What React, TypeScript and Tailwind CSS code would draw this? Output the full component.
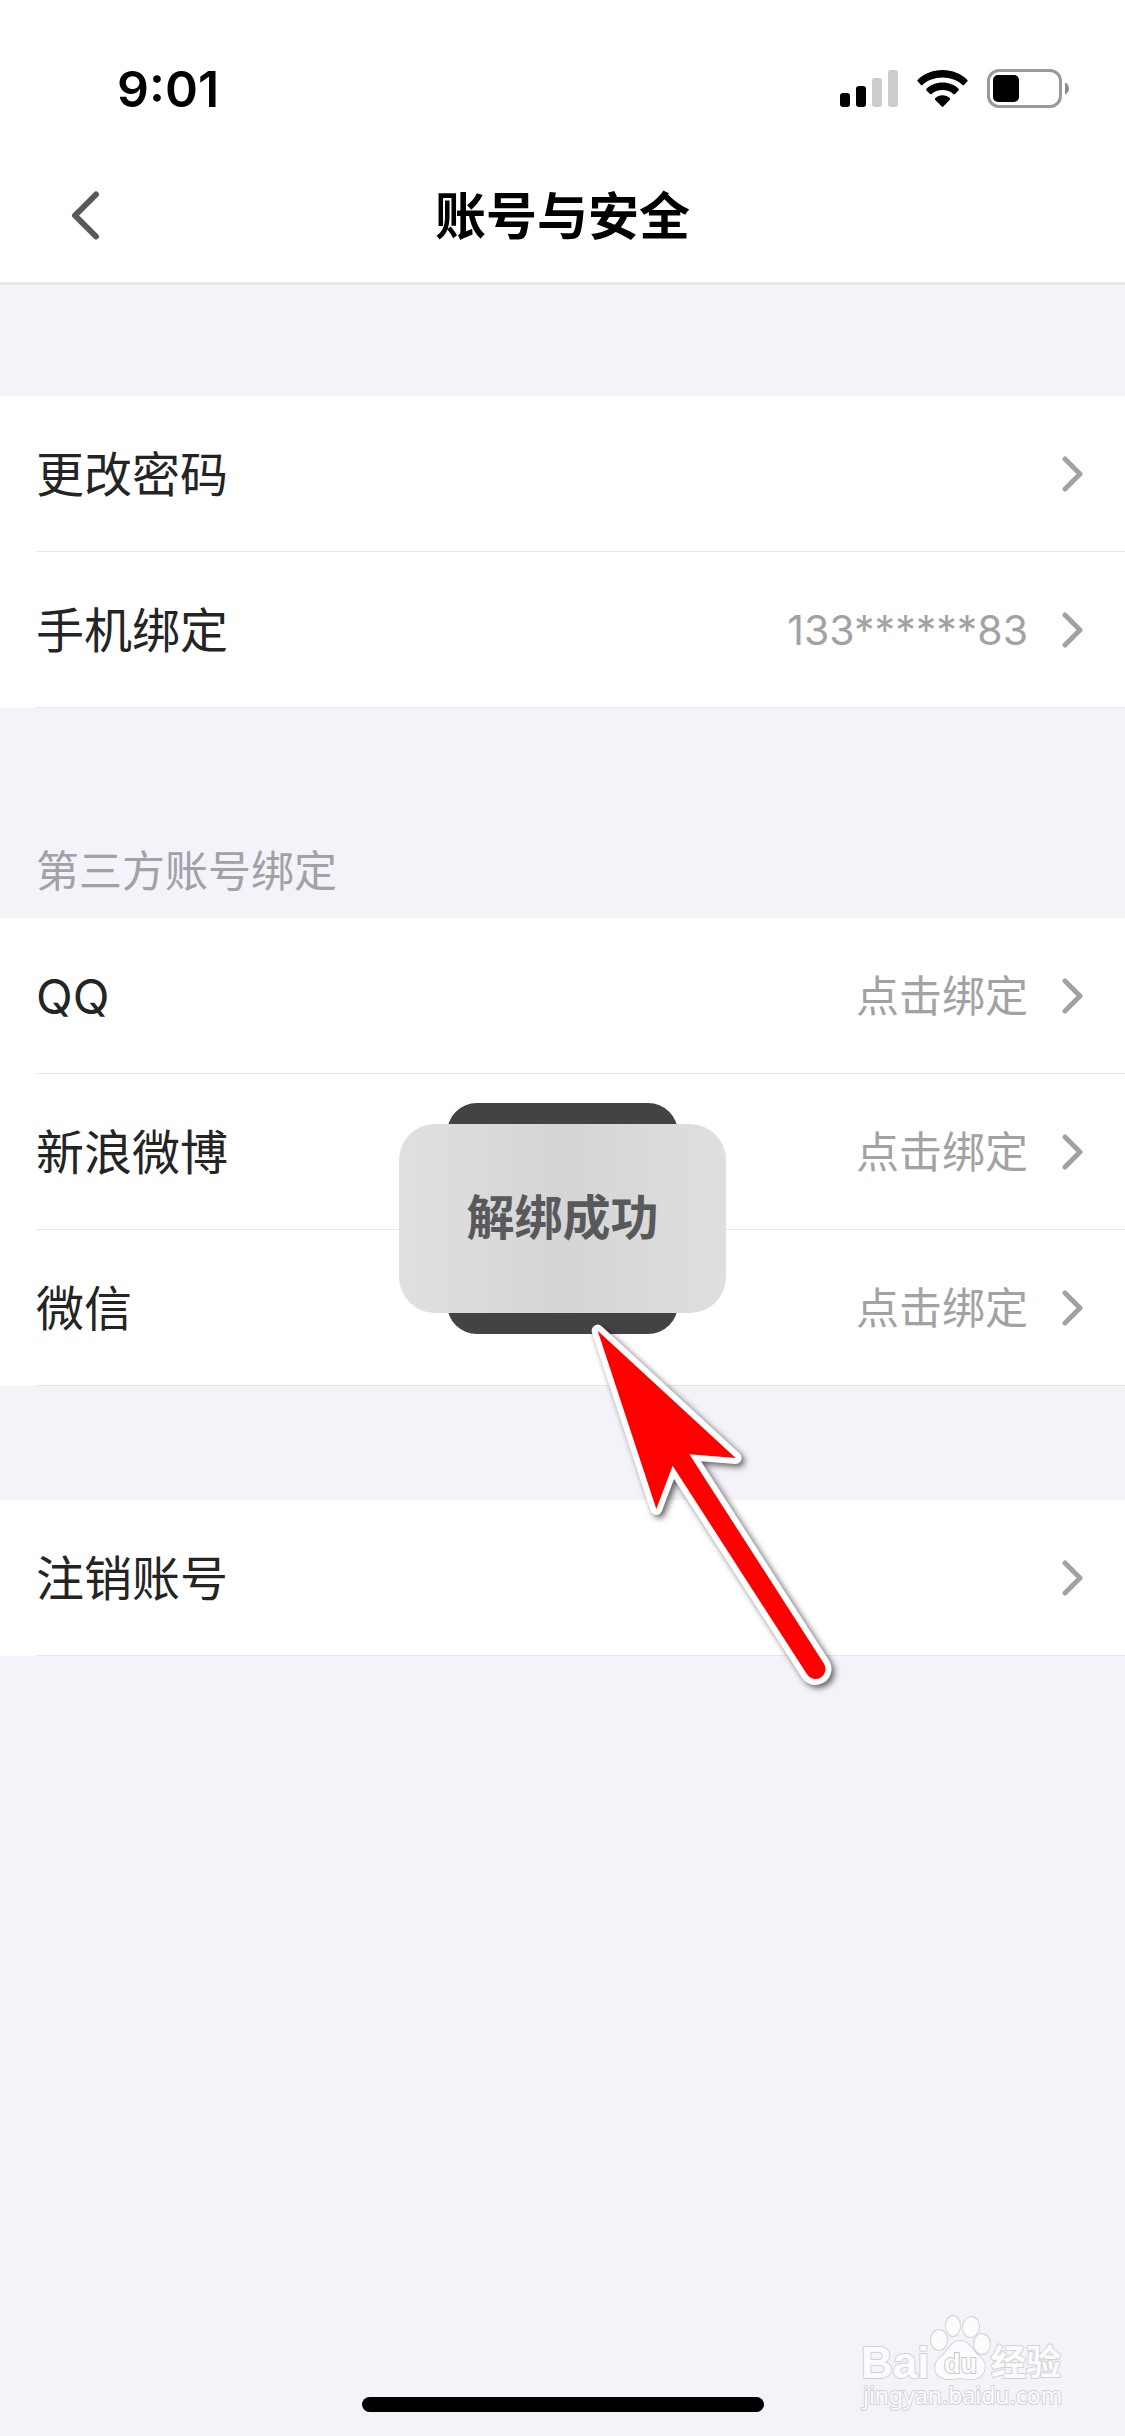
import React from "react";
import clsx from "clsx";

type Item = {
  label: string;
  value?: string;
  numeric?: boolean;
};

const accountItems: Item[] = [
  { label: "更改密码" },
  { label: "手机绑定", value: "133******83", numeric: true },
];

const thirdPartyItems: Item[] = [
  { label: "QQ", value: "点击绑定" },
  { label: "新浪微博", value: "点击绑定" },
  { label: "微信", value: "点击绑定" },
];

const StatusBar = () => {
  return (
    <div className="flex h-[132px] items-center justify-between pt-[45px] pr-14 pl-[117px]">
      <span className="text-[50px] leading-none font-semibold">9:01</span>
      <div className="flex items-center gap-[19px]">
        <svg width="58" height="37" viewBox="0 0 58 37" aria-hidden="true">
          <rect x="0" y="23" width="10" height="14" rx="3" />
          <rect x="16" y="16" width="10" height="21" rx="3" />
          <rect x="32" y="8" width="10" height="29" rx="3" fill="#cccccc" />
          <rect x="48" y="0" width="10" height="37" rx="3" fill="#cccccc" />
        </svg>
        <svg width="51" height="37" viewBox="0 0 51 37" aria-hidden="true">
          <path d="M25.5 0C35.500 0 44.300 3.800 50.200 9.700Q51.100 10.700 50.200 11.600L47 14.900Q46.300 15.600 45.500 14.900C40.500 10.200 33.500 7.400 25.500 7.400S10.500 10.200 5.500 14.900Q4.700 15.600 4 14.900L.8 11.600Q-.1 10.700 .8 9.700C6.700 3.800 15.500 0 25.500 0Z" />
          <path d="M25.5 12.600C32 12.600 37.500 15 41.500 18.700Q42.300 19.600 41.500 20.500L38 24Q37.200 24.700 36.400 24C33.500 21.500 29.800 20 25.500 20S17.500 21.500 14.600 24Q13.800 24.700 13 24L9.500 20.500Q8.700 19.600 9.500 18.700C13.500 15 19 12.600 25.500 12.600Z" />
          <path d="M25.500 25.300C28.500 25.300 31 26.500 32.700 28.100Q33.500 29 32.700 29.900L26.300 36.400Q25.500 37.200 24.700 36.400L18.300 29.900Q17.500 29 18.300 28.100C20 26.500 22.500 25.300 25.500 25.300Z" />
        </svg>
        <svg width="82" height="39" viewBox="0 0 82 39" aria-hidden="true">
          <rect
            x="1.500"
            y="1.500"
            width="72"
            height="36"
            rx="10.500"
            fill="none"
            stroke="#999999"
            strokeWidth="3"
          />
          <rect x="6" y="6" width="26" height="27" rx="5" />
          <path d="M78 13.500C80.500 14.500 82 17 82 19.500S80.500 24.500 78 25.500Z" fill="#8c8c8c" />
        </svg>
      </div>
    </div>
  );
};

const Header = () => {
  return (
    <header className="border-b-3 border-[#e8e8ef] bg-white text-black">
      <StatusBar />
      <div className="grid h-[150px] grid-cols-[1fr_auto_1fr] items-center pt-4">
        <button type="button" aria-label="返回" className="ml-[70px] w-fit">
          <svg width="30" height="49" viewBox="0 0 30 49" aria-hidden="true">
            <path
              d="M26 3.500L5 24.500L26 45.500"
              fill="none"
              stroke="#58595b"
              strokeWidth="6"
              strokeLinecap="round"
              strokeLinejoin="round"
            />
          </svg>
        </button>
        <h1 className="pt-0.5 text-[51px] leading-none font-semibold">账号与安全</h1>
      </div>
    </header>
  );
};

const Row = ({ label, value, numeric }: Item) => {
  return (
    <li className="bg-white pl-9">
      <button
        type="button"
        className="flex h-[156px] w-full items-center border-b border-[#e6e6e8] pr-[42px] text-left"
      >
        <span className="flex-1 pt-0.5 text-[48px] text-[#242424]">{label}</span>
        {value && (
          <span
            className={clsx(
              "mr-[34px] pt-0.5 text-[#a1a1a6]",
              numeric ? "text-[41px]" : "text-[43px]"
            )}
          >
            {value}
          </span>
        )}
        <svg width="21" height="36" viewBox="0 0 21 36" aria-hidden="true">
          <path
            d="M3 3L18 18L3 33"
            fill="none"
            stroke="#a1a1a6"
            strokeWidth="5"
            strokeLinecap="round"
            strokeLinejoin="round"
          />
        </svg>
      </button>
    </li>
  );
};

const Toast = () => {
  return (
    <div className="pointer-events-none absolute inset-0 flex items-center justify-center">
      <div className="absolute h-[231px] w-[231px] rounded-[30px] bg-[#434343]" />
      <div
        role="status"
        className="relative rounded-[36px] bg-linear-to-r from-[#e0e0e0] via-[#d5d5d5] to-[#dfdfdf] px-[67px] pt-[59px] pb-[61px] text-[48px] leading-[69px] font-semibold text-[#58595b]"
      >
        解绑成功
      </div>
    </div>
  );
};

const Pointer = () => {
  return (
    <svg
      className="pointer-events-none absolute top-1/2 left-1/2 mt-[82px] ml-[7px] drop-shadow-[3px_3px_3px_rgba(0,0,0,0.6)]"
      width="290"
      height="400"
      viewBox="0 0 870 1200"
      aria-hidden="true"
    >
      <path
        d="M83 92L497 474L358 463L762 1091A30 30 0 0 1 711 1123L308 497L259 627Z"
        fill="#ff0000"
        stroke="#ffffff"
        strokeWidth="36"
        strokeLinejoin="round"
        paintOrder="stroke"
      />
    </svg>
  );
};

const Watermark = () => {
  return (
    <svg
      className="pointer-events-none absolute right-[58px] bottom-[22px]"
      width="208"
      height="102"
      viewBox="0 0 208 102"
      fill="#fcfcfc"
      stroke="#d2d2d6"
      strokeWidth="2"
      paintOrder="stroke"
      strokeLinejoin="round"
    >
      <text x="2" y="66" fontFamily="Liberation Sans, sans-serif" fontSize="44" fontWeight="700">
        Bai
      </text>
      <ellipse cx="80" cy="28" rx="8" ry="10" />
      <ellipse cx="94" cy="14" rx="7" ry="10" />
      <ellipse cx="112" cy="15" rx="8" ry="10" transform="rotate(8 112 15)" />
      <ellipse cx="123" cy="32" rx="8" ry="10" />
      <path d="M101 29C110 29 112 37 119 43C125 48 127 53 125 59C122 68 113 68 101 66C89 68 81 68 77 60C74 52 79 47 84 43C90 37 93 29 101 29Z" />
      <text
        x="85"
        y="61"
        fontFamily="Liberation Sans, sans-serif"
        fontSize="27"
        fontWeight="700"
        stroke="#c8c8cc"
      >
        du
      </text>
      <text x="132" y="63" fontFamily="Noto Sans CJK SC, sans-serif" fontSize="35" fontWeight="700">
        经验
      </text>
      <text x="4" y="92" fontFamily="Noto Sans, sans-serif" fontSize="23">
        jingyan.baidu.com
      </text>
    </svg>
  );
};

const App = () => {
  return (
    <div className="relative flex min-h-screen flex-col bg-[#f4f3f9] font-['Inter','Noto_Sans_CJK_SC',sans-serif]">
      <Header />
      <main>
        <ul className="mt-[111px]">
          {accountItems.map((item) => (
            <Row key={item.label} {...item} />
          ))}
        </ul>
        <h2 className="mt-[132px] mb-4 pl-9 text-[43px] leading-[62px] text-[#a1a1a6]">
          第三方账号绑定
        </h2>
        <ul>
          {thirdPartyItems.map((item) => (
            <Row key={item.label} {...item} />
          ))}
        </ul>
        <ul className="mt-[114px]">
          <Row label="注销账号" />
        </ul>
      </main>
      <div className="mx-auto mt-auto mb-6 h-[15px] w-[402px] rounded-full bg-black" />
      <Toast />
      <Pointer />
      <Watermark />
    </div>
  );
};

export default App;
